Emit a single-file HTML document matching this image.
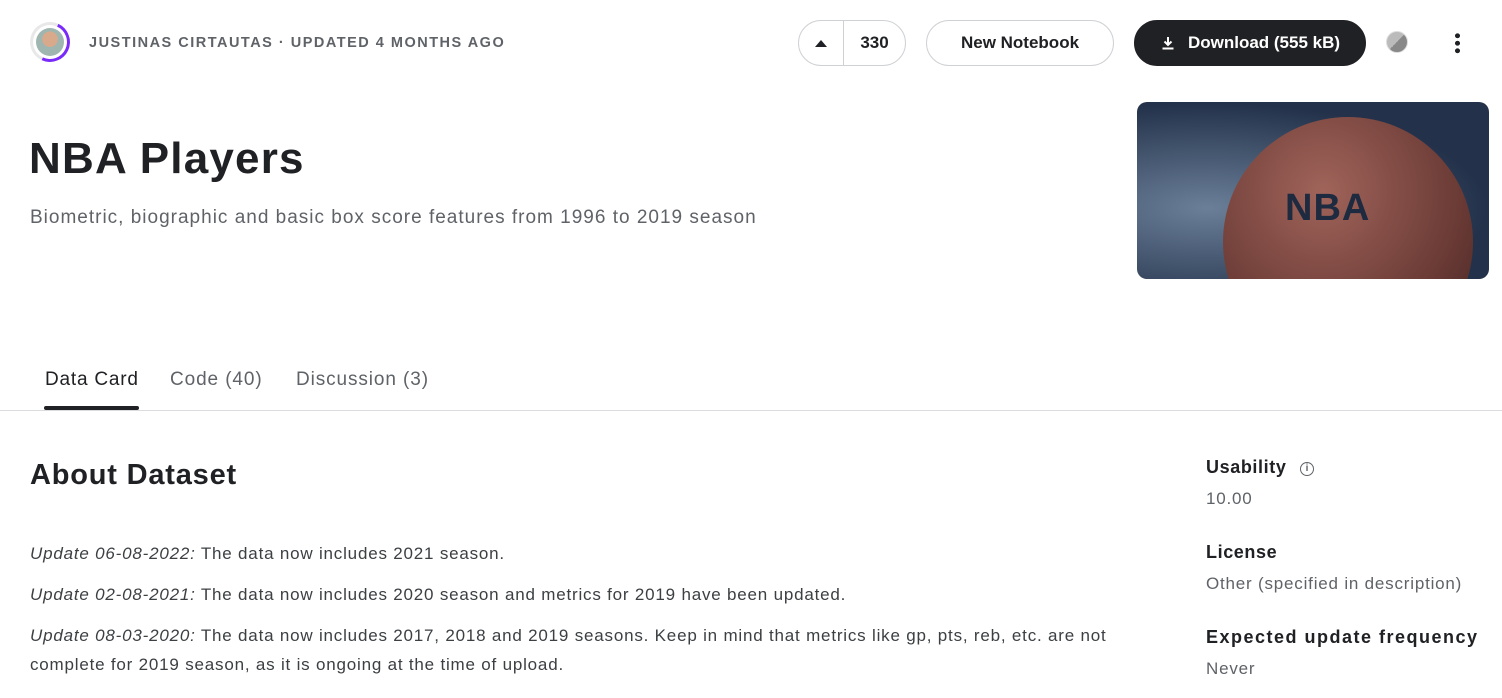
<!DOCTYPE html>
<html><head><meta charset="utf-8"><style>
*{box-sizing:border-box;margin:0;padding:0}
body{width:1502px;height:698px;overflow:hidden;background:#fff;font-family:"Liberation Sans",sans-serif;color:#202124;position:relative}
.abs{position:absolute}
.btn{position:absolute;border:1px solid #cfd1d4;border-radius:23px;height:46px;display:flex;align-items:center;justify-content:center;font-weight:bold;font-size:17px}
.muted{color:#5f6368}
</style></head><body>
<div class="abs" style="left:30px;top:22px;width:40px;height:40px;border-radius:50%;border:3px solid #7b2bf9;border-left-color:#e8e8e8;border-top-color:#e8e8e8;transform:rotate(-20deg)"></div>
<div class="abs" style="left:36px;top:28px;width:28px;height:28px;border-radius:50%;background:radial-gradient(circle at 50% 40%,#d9a98c 0 35%,#9fb5b0 36%)"></div>
<div class="abs muted" style="left:89px;top:35px;font-size:14.5px;font-weight:bold;letter-spacing:1.5px">JUSTINAS CIRTAUTAS · UPDATED 4 MONTHS AGO</div>
<div class="btn" style="left:798px;top:20px;width:108px;justify-content:flex-start">
 <div style="width:45px;height:44px;border-right:1px solid #cfd1d4;display:flex;align-items:center;justify-content:center"><div style="width:0;height:0;border-left:6px solid transparent;border-right:6px solid transparent;border-bottom:7px solid #202124"></div></div>
 <div style="flex:1;text-align:center">330</div></div>
<div class="btn" style="left:926px;top:20px;width:188px">New Notebook</div>
<div class="btn" style="left:1134px;top:20px;width:232px;background:#202124;color:#fff;border-color:#202124">
<svg width="16" height="16" viewBox="0 0 16 16" style="margin-right:12px"><path d="M8 2v8M4.5 6.5L8 10l3.5-3.5M2.5 13.5h11" stroke="#fff" stroke-width="2" fill="none"/></svg>Download (555 kB)</div>
<div class="abs" style="left:1386px;top:31px;width:22px;height:22px;border-radius:50%;background:linear-gradient(135deg,#bbb 50%,#888 50%);border:1px solid #ddd"></div>
<div class="abs" style="left:1455px;top:32px;width:5px;height:22px;background:radial-gradient(circle,#202124 2.3px,transparent 2.6px) 0 0/5px 7.5px"></div>
<div class="abs" style="left:29px;top:134px;font-size:44px;font-weight:bold;letter-spacing:1.2px">NBA Players</div>
<div class="abs muted" style="left:30px;top:207px;font-size:19px;letter-spacing:1px">Biometric, biographic and basic box score features from 1996 to 2019 season</div>
<div class="abs" style="left:1137px;top:102px;width:352px;height:177px;border-radius:10px;overflow:hidden;background:radial-gradient(ellipse at 20% 60%,#6b7f99,#23324a 70%)">
 <div class="abs" style="left:86px;top:15px;width:250px;height:250px;border-radius:50%;background:radial-gradient(circle at 40% 30%,#a0645a,#6a3a35 60%,#3a2020);"></div>
 <div class="abs" style="left:148px;top:85px;font-size:38px;font-weight:bold;color:#1d2a40;letter-spacing:1px">NBA</div>
</div>
<div class="abs" style="left:45px;top:369px;font-size:19px;letter-spacing:0.8px">Data Card</div>
<div class="abs muted" style="left:170px;top:369px;font-size:19px;letter-spacing:0.9px">Code (40)</div>
<div class="abs muted" style="left:296px;top:369px;font-size:19px;letter-spacing:0.9px">Discussion (3)</div>
<div class="abs" style="left:44px;top:406px;width:95px;height:4px;background:#202124;border-radius:2px"></div>
<div class="abs" style="left:0;top:410px;width:1502px;height:1px;background:#dadce0"></div>
<div class="abs" style="left:30px;top:459px;font-size:29px;font-weight:bold;letter-spacing:0.8px">About Dataset</div>
<div class="abs" style="left:30px;top:539px;font-size:17px;color:#3c4043;line-height:29px;width:1090px;letter-spacing:0.8px">
<p><i>Update 06-08-2022:</i> The data now includes 2021 season.</p>
<p style="margin-top:12px"><i>Update 02-08-2021:</i> The data now includes 2020 season and metrics for 2019 have been updated.</p>
<p style="margin-top:12px"><i>Update 08-03-2020:</i> The data now includes 2017, 2018 and 2019 seasons. Keep in mind that metrics like gp, pts, reb, etc. are not complete for 2019 season, as it is ongoing at the time of upload.</p></div>
<div class="abs" style="left:1206px;top:457px;font-size:18px;font-weight:bold;letter-spacing:0.6px">Usability <span style="display:inline-block;width:14px;height:14px;border:1.5px solid #5f6368;border-radius:50%;font-size:10px;text-align:center;line-height:11px;color:#5f6368;margin-left:8px;vertical-align:2px;letter-spacing:0">i</span></div>
<div class="abs muted" style="left:1206px;top:489px;font-size:17px;letter-spacing:0.8px">10.00</div>
<div class="abs" style="left:1206px;top:542px;font-size:18px;font-weight:bold;letter-spacing:0.6px">License</div>
<div class="abs muted" style="left:1206px;top:574px;font-size:17px;letter-spacing:0.8px">Other (specified in description)</div>
<div class="abs" style="left:1206px;top:627px;font-size:18px;font-weight:bold;letter-spacing:1.5px">Expected update frequency</div>
<div class="abs muted" style="left:1206px;top:659px;font-size:17px;letter-spacing:0.8px">Never</div>
</body></html>
